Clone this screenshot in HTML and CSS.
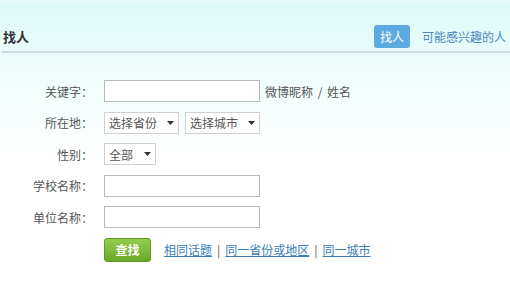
FILE: index.html
```html
<!DOCTYPE html>
<html lang="zh-CN">
<head>
    <meta charset="UTF-8">
    <title>找人</title>
    <link rel="stylesheet" href="styles.css">
</head>
<body>
    <div class="page">
        <!-- Header with title and tabs -->
        <div class="head">
            <h2 class="title">找人</h2>
            <div class="tabs">
                <span class="tab active">找人</span>
                <a class="tab" href="#">可能感兴趣的人</a>
            </div>
        </div>

        <!-- Search form -->
        <form class="search">
            <div class="row">
                <label class="label">关键字：</label>
                <input type="text" class="text-input">
                <span class="hint">微博昵称 / 姓名</span>
            </div>
            <div class="row">
                <label class="label">所在地：</label>
                <div class="select wide">选择省份<svg class="arrow" width="7" height="4" viewBox="0 0 7 4"><path d="M0 0H7L3.5 4Z"/></svg></div>
                <div class="select wide">选择城市<svg class="arrow" width="7" height="4" viewBox="0 0 7 4"><path d="M0 0H7L3.5 4Z"/></svg></div>
            </div>
            <div class="row">
                <label class="label">性别：</label>
                <div class="select narrow">全部<svg class="arrow" width="7" height="4" viewBox="0 0 7 4"><path d="M0 0H7L3.5 4Z"/></svg></div>
            </div>
            <div class="row">
                <label class="label">学校名称：</label>
                <input type="text" class="text-input">
            </div>
            <div class="row">
                <label class="label">单位名称：</label>
                <input type="text" class="text-input">
            </div>
            <div class="row actions">
                <button type="button" class="btn">查找</button>
                <a href="#" class="link">相同话题</a>
                <span class="sep">|</span>
                <a href="#" class="link">同一省份或地区</a>
                <span class="sep">|</span>
                <a href="#" class="link">同一城市</a>
            </div>
        </form>
    </div>
</body>
</html>
```

FILE: styles.css
```css
* {
    margin: 0;
    padding: 0;
    box-sizing: border-box;
}

html, body {
    width: 100%;
    height: 100%;
}

body {
    font-family: "Noto Sans CJK SC", "Liberation Sans", sans-serif;
    font-size: 12px;
    color: #555;
    background: #fff;
}

/* Light cyan wash fading to white */
.page {
    height: 100%;
    padding-top: 2px;
    background: linear-gradient(to bottom, #e6fcfa 0, #dcfaf8 4px, #f4fefd 100px, #fff 160px);
}

/* Header */
.head {
    display: flex;
    align-items: center;
    justify-content: space-between;
    height: 51px;
    margin-left: 2px;
    padding: 20px 4px 0 1px;
    border-bottom: 2px solid #c9dcdb;
}

.title {
    font-size: 13px;
    font-weight: bold;
    color: #333;
    line-height: 20px;
}

.tabs {
    display: flex;
    align-items: center;
    gap: 12px;
}

.tab {
    font-size: 12px;
    color: #4a86c2;
    text-decoration: none;
    line-height: 23px;
}

.tab.active {
    background-color: #5daae0;
    color: #fff;
    border-radius: 3px;
    padding: 0 6px;
}

/* Form */
.search {
    padding-top: 27px;
}

.row {
    display: flex;
    align-items: center;
    height: 22px;
    margin-bottom: 9.5px;
}

.label {
    width: 93px;
    margin-right: 11px;
    text-align: right;
    color: #555;
}

.text-input {
    width: 156px;
    height: 22px;
    border: 1px solid #b9b9b9;
    background: #fff;
    outline: none;
}

.hint {
    margin-left: 5px;
    color: #555;
    word-spacing: 2px;
}

.select {
    display: flex;
    align-items: center;
    justify-content: space-between;
    height: 22px;
    padding: 0 4px 0 4px;
    border: 1px solid #d0d0d0;
    background: #fff;
    color: #555;
    margin-right: 6px;
}

.select.wide {
    width: 75px;
}

.select.narrow {
    width: 52px;
}

.arrow {
    fill: #333;
}

/* Buttons and links */
.actions {
    height: 24px;
    margin-top: 1px;
    padding-left: 104px;
}

.btn {
    width: 47px;
    height: 24px;
    border: 1px solid #5f9a24;
    border-radius: 3px;
    background: linear-gradient(to bottom, #94cb4c, #6aa92a);
    color: #fff;
    font-family: inherit;
    font-size: 12px;
    font-weight: bold;
    margin-right: 13px;
}

.link {
    color: #3a7dbd;
    text-decoration: underline;
}

.sep {
    color: #555;
    margin: 0 5px;
}
```
